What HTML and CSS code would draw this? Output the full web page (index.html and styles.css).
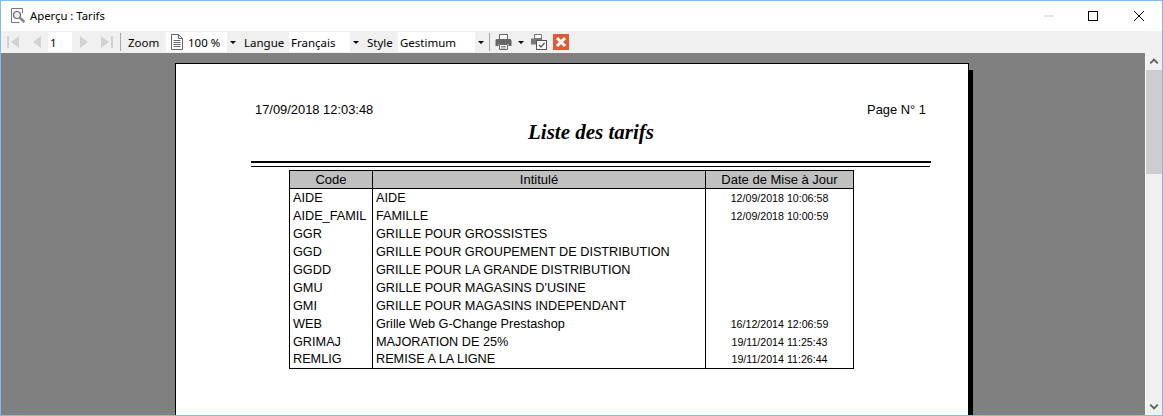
FILE: index.html
```html
<!DOCTYPE html>
<html lang="fr">
<head>
<meta charset="utf-8">
<title>Aperçu : Tarifs</title>
<link rel="stylesheet" href="styles.css">
</head>
<body>
<div class="window">
  <header class="titlebar">
    <svg class="app-icon" width="16" height="16" viewBox="0 0 16 16"><path d="M12.500 5V.5h-11v14h8" fill="#fff" stroke="#777"/><circle cx="7" cy="7" r="3.500" fill="#e8eef2" stroke="#666" stroke-width="1.200"/><path d="M9.500 9.500l5 4.500" stroke="#888" stroke-width="2.400"/></svg>
    <span class="title">Aperçu : Tarifs</span>
    <div class="controls">
      <svg class="ctl" width="46" height="30" viewBox="0 0 46 30"><path d="M20 15h10" stroke="#ccc"/></svg>
      <svg class="ctl" width="46" height="30" viewBox="0 0 46 30"><rect x="18.500" y="10.500" width="9" height="9" fill="none" stroke="#000"/></svg>
      <svg class="ctl" width="46" height="30" viewBox="0 0 46 30"><path d="M18 10l10 10M28 10L18 20" stroke="#000" fill="none"/></svg>
    </div>
  </header>
  <nav class="toolbar">
    <svg class="nav first" width="16" height="16" viewBox="0 0 16 16"><path d="M2 2h2v12H2zM14 2v12L6 8z" fill="#d2d2d2"/></svg>
    <svg class="nav prev" width="10" height="16" viewBox="0 0 10 16"><path d="M9 2v12L1 8z" fill="#d2d2d2"/></svg>
    <span class="field page-field">1</span>
    <svg class="nav next" width="10" height="16" viewBox="0 0 10 16"><path d="M1 2v12l8-6z" fill="#d2d2d2"/></svg>
    <svg class="nav last" width="16" height="16" viewBox="0 0 16 16"><path d="M2 2v12l8-6zM12 2h2v12h-2z" fill="#d2d2d2"/></svg>
    <span class="sep sep-a"></span>
    <span class="label zoom-label">Zoom</span>
    <span class="field zoom-field">
      <svg width="14" height="16" viewBox="0 0 14 16"><path d="M1.500.5h7l4 4v11h-11z" fill="#fff" stroke="#666"/><path d="M8.500.5v4h4M3.500 6.500h7M3.500 8.500h7M3.500 10.500h7M3.500 12.500h7" fill="none" stroke="#666"/></svg>
      <span class="zoom-value">100 %</span>
    </span>
    <span class="drop"><i class="caret"></i></span>
    <span class="label lang-label">Langue</span>
    <span class="field lang-field">Français</span>
    <span class="drop"><i class="caret"></i></span>
    <span class="label style-label">Style</span>
    <span class="field style-field">Gestimum</span>
    <span class="drop"><i class="caret"></i></span>
    <span class="sep sep-b"></span>
    <svg class="printer" width="17" height="16" viewBox="0 0 17 16"><path d="M4.500.5h8v5h-8z" fill="#fff" stroke="#666"/><path d="M2 5h13a1.500 1.500 0 0 1 1.500 1.500V12h-3v-2h-10v2H.5V6.500A1.500 1.500 0 0 1 2 5z" fill="#666"/><path d="M4.500 10.500h8v5h-8z" fill="#fff" stroke="#666"/><path d="M6 12.500h5M6 14h5" stroke="#888"/></svg>
    <i class="caret print-caret"></i>
    <svg class="batch" width="17" height="16" viewBox="0 0 17 16"><path d="M4.500.5h7v4h-7z" fill="#fff" stroke="#777"/><path d="M1 4.500h11v6H1z" fill="#777"/><rect x="6.500" y="6.500" width="10" height="9" fill="#fff" stroke="#555"/><path d="M9 11l2 2 3.500-4" fill="none" stroke="#555" stroke-width="1.200"/></svg>
    <svg class="close" width="16" height="16" viewBox="0 0 16 16"><rect width="16" height="16" fill="#e05b35"/><path d="M4 4l8 8M12 4l-8 8" stroke="#fff" stroke-width="3"/></svg>
  </nav>
  <div class="body">
    <main class="viewer">
      <article class="page">
        <div class="meta"><span>17/09/2018 12:03:48</span><span>Page N° 1</span></div>
        <h1 class="doc-title">Liste des tarifs</h1>
        <div class="rule-thick"></div>
        <div class="rule-thin"></div>
        <table class="tarifs">
          <thead><tr><th class="c1">Code</th><th class="c2">Intitulé</th><th class="c3">Date de Mise à Jour</th></tr></thead>
          <tbody>
            <tr><td>AIDE</td><td>AIDE</td><td class="date">12/09/2018 10:06:58</td></tr>
            <tr><td>AIDE_FAMIL</td><td>FAMILLE</td><td class="date">12/09/2018 10:00:59</td></tr>
            <tr><td>GGR</td><td>GRILLE POUR GROSSISTES</td><td class="date"></td></tr>
            <tr><td>GGD</td><td>GRILLE POUR GROUPEMENT DE DISTRIBUTION</td><td class="date"></td></tr>
            <tr><td>GGDD</td><td>GRILLE POUR LA GRANDE DISTRIBUTION</td><td class="date"></td></tr>
            <tr><td>GMU</td><td>GRILLE POUR MAGASINS D'USINE</td><td class="date"></td></tr>
            <tr><td>GMI</td><td>GRILLE POUR MAGASINS INDEPENDANT</td><td class="date"></td></tr>
            <tr><td>WEB</td><td>Grille Web G-Change Prestashop</td><td class="date">16/12/2014 12:06:59</td></tr>
            <tr><td>GRIMAJ</td><td>MAJORATION DE 25%</td><td class="date">19/11/2014 11:25:43</td></tr>
            <tr class="last-row"><td>REMLIG</td><td>REMISE A LA LIGNE</td><td class="date">19/11/2014 11:26:44</td></tr>
          </tbody>
        </table>
      </article>
    </main>
    <aside class="scrollbar">
      <svg class="arrow" width="17" height="17" viewBox="0 0 17 17"><path d="M4.500 10.500l4-4 4 4" fill="none" stroke="#606060" stroke-width="2"/></svg>
      <div class="thumb"></div>
      <div class="track"></div>
      <svg class="arrow" width="17" height="17" viewBox="0 0 17 17"><path d="M4.500 6.500l4 4 4-4" fill="none" stroke="#606060" stroke-width="2"/></svg>
    </aside>
  </div>
</div>
</body>
</html>
```
FILE: styles.css
```css
* { box-sizing: border-box; }
html, body { margin: 0; height: 100%; overflow: hidden; background: #fff; }
.window {
  width: 1163px; height: 416px;
  display: flex; flex-direction: column;
  border: 1px solid #7fbcf5;
  font-family: "Noto Sans", "Open Sans", sans-serif;
  font-size: 11.5px; color: #000;
}
.titlebar { height: 30px; display: flex; align-items: center; padding-left: 9px; background: #fff; flex: none; }
.title { margin-left: 4px; margin-bottom: 2px; font-size: 11.300px; }
.controls { margin-left: auto; display: flex; }
.ctl { display: block; }
.toolbar { height: 22px; flex: none; display: flex; align-items: center; background: #f0f0f0; padding-left: 4px; }
.field { background: #fff; height: 20px; display: flex; align-items: center; padding-left: 2px; flex: none; }
.drop { width: 11px; height: 20px; display: flex; align-items: center; justify-content: center; background: #f0f0f0; flex: none; }
.caret { display: block; width: 0; height: 0; border: 3px solid transparent; border-top: 3px solid #000; border-bottom: 0; }
.sep { width: 1px; height: 18px; background: #a8a8a8; flex: none; }
.label { flex: none; width: auto; }
.nav { flex: none; }
.prev { margin-left: 11px; }
.page-field { width: 24px; margin-left: 6px; padding-left: 2px; }
.next { margin-left: 7px; }
.last { margin-left: 10px; }
.sep-a { margin-left: 5px; }
.zoom-label { margin-left: 7px; width: 32px; }
.zoom-field { width: 61px; margin-left: 6px; padding-left: 4px; }
.zoom-value { margin-left: 4px; }
.lang-label { margin-left: 6px; width: 39px; }
.lang-field { width: 61px; margin-left: 6px; }
.style-label { margin-left: 6px; width: 26px; }
.style-field { width: 77px; margin-left: 5px; }
.sep-b { margin-left: 3px; }
.printer { margin-left: 5px; flex: none; }
.print-caret { margin-left: 6px; flex: none; }
.batch { margin-left: 6px; flex: none; }
.close { margin-left: 6px; flex: none; }
.body { flex: 1; min-height: 0; display: flex; }
.viewer { flex: 1; min-width: 0; background: #808080; padding: 10px 0 0 174px; overflow: hidden; border-right: 1px solid #fff; }
.scrollbar { width: 16px; flex: none; display: flex; flex-direction: column; background: #f0f0f0; }
.arrow { display: block; flex: none; width: 16px; }
.thumb { height: 104px; background: #cdcdcd; flex: none; }
.track { flex: 1; }
.page {
  width: 794px; height: 400px;
  background: #fff; border: 1px solid #000;
  box-shadow: 4px 7px 0 #000;
  font-family: "Liberation Sans", Arial, sans-serif;
  padding: 39px 0 0 75px;
}
.meta { width: 671px; margin-left: 4px; display: flex; justify-content: space-between; font-size: 12.900px; line-height: 14px; }
.doc-title { margin: 4px 0 0; width: 680px; text-align: center; font: italic bold 21px/23px "Liberation Serif", "Times New Roman", serif; }
.rule-thick { width: 680px; height: 2px; background: #000; margin-top: 17px; }
.rule-thin { width: 679px; height: 1px; background: #000; margin-top: 3px; }
.tarifs { border-collapse: collapse; table-layout: fixed; width: 565px; margin: 3px 0 0 38px; font-size: 12.700px; }
.tarifs th { height: 18px; padding: 0; background: #c0c0c0; font-weight: normal; font-size: 13px; border: 1px solid #000; line-height: 17px; }
.c1 { width: 83px; }
.c2 { width: 333px; }
.c3 { width: 148px; }
.tarifs td { height: 18px; padding: 0 0 0 3px; border-left: 1px solid #000; border-right: 1px solid #000; line-height: 18px; white-space: nowrap; overflow: hidden; }
.tarifs .last-row td { height: 17px; line-height: 17px; border-bottom: 1px solid #000; }
.tarifs td.date { font-size: 10.650px; text-align: center; padding: 0; }
```
